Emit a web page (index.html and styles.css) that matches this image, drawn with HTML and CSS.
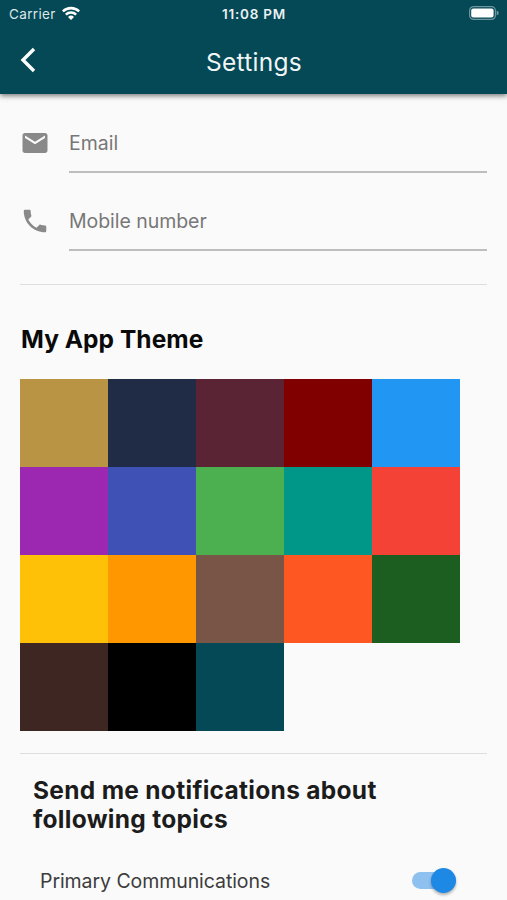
FILE: index.html
```html
<!DOCTYPE html>
<html lang="en">
<head>
<meta charset="utf-8">
<title>Settings</title>
<link rel="stylesheet" href="styles.css">
</head>
<body>
<header class="appbar">
  <div class="status">
    <div class="carrier"><span class="carrier-name">Carrier</span>
      <svg class="wifi" viewBox="0 0 18 14"><path d="M0 4.4A13 13 0 0 1 18 4.4L16.3 6.3A10.6 10.6 0 0 0 1.7 6.3ZM3 7.7A8.6 8.6 0 0 1 15 7.7L13.3 9.5A6.2 6.2 0 0 0 4.7 9.5ZM6 10.9A4.3 4.3 0 0 1 12 10.9L9 14Z"/></svg>
    </div>
    <time class="clock">11:08 PM</time>
    <svg class="battery" viewBox="0 0 30 14"><rect class="shell" x=".6" y=".6" width="25.8" height="12.8" rx="4"/><rect x="2.2" y="2.4" width="22.4" height="9.2" rx="2"/><path class="cap" d="M27.6 4.6Q29.8 5.2 29.8 7T27.6 9.4Z"/></svg>
  </div>
  <div class="toolbar">
    <svg class="back" viewBox="0 0 16 26"><path d="M14 2 3 13l11 11"/></svg>
    <h1 class="title">Settings</h1>
  </div>
</header>
<main>
  <section class="fields">
    <div class="field">
      <svg class="icon" viewBox="0 0 24 24"><path d="M20 4H4c-1.1 0-1.99.9-1.99 2L2 18c0 1.1.9 2 2 2h16c1.1 0 2-.9 2-2V6c0-1.1-.9-2-2-2zm0 4l-8 5-8-5V6l8 5 8-5v2z"/></svg>
      <div class="input"><span class="email">Email</span></div>
    </div>
    <div class="field">
      <svg class="icon" viewBox="0 0 24 24"><path d="M6.62 10.79c1.44 2.83 3.76 5.14 6.59 6.59l2.2-2.2c.27-.27.67-.36 1.02-.24 1.12.37 2.33.57 3.57.57.55 0 1 .45 1 1V20c0 .55-.45 1-1 1-9.39 0-17-7.61-17-17 0-.55.45-1 1-1h3.5c.55 0 1 .45 1 1 0 1.25.2 2.45.57 3.57.11.35.03.74-.25 1.02l-2.2 2.2z"/></svg>
      <div class="input"><span class="mobile">Mobile number</span></div>
    </div>
  </section>
  <section class="theme">
    <h2 class="theme-title"><span>My App Theme</span></h2>
    <div class="swatches">
      <i class="gold"></i><i class="navy"></i><i class="wine"></i><i class="maroon"></i><i class="blue"></i>
      <i class="purple"></i><i class="indigo"></i><i class="green"></i><i class="teal"></i><i class="red"></i>
      <i class="amber"></i><i class="orange"></i><i class="brown"></i><i class="deep"></i><i class="forest"></i>
      <i class="coffee"></i><i class="black"></i><i class="petrol"></i>
    </div>
  </section>
  <section class="topics">
    <h2 class="topics-title">Send me notifications about<br>following topics</h2>
    <div class="topic"><span class="topic-name">Primary Communications</span><span class="switch"></span></div>
  </section>
</main>
</body>
</html>
```
FILE: styles.css
```css
* { box-sizing: border-box; }
body { margin: 0; height: 900px; overflow: hidden; background: #fafafa; color: #1c1c1c; font-family: Inter, "Liberation Sans", sans-serif; }
h1, h2 { margin: 0; }
.appbar { position: relative; height: 94px; background: #054856; color: #fff; box-shadow: 0 2px 5px rgba(0,0,0,.5); }
.status { display: grid; grid-template-columns: 1fr auto 1fr; align-items: center; height: 27px; padding: 0 8px 0 9px; }
.carrier { display: flex; align-items: center; gap: 6px; font-size: 13.5px; letter-spacing: .35px; color: #dce7e9; }
.wifi { width: 18px; height: 14px; margin-top: -1px; fill: #fff; }
.clock { font-size: 13.5px; font-weight: 600; letter-spacing: .75px; color: #eaf1f2; }
.battery { width: 30px; height: 14px; margin-top: -1px; fill: #fff; justify-self: end; }
.shell { fill: none; stroke: #6f959e; stroke-width: 1.2; }
.cap { fill: #6f959e; }
.toolbar { display: grid; grid-template-columns: 20px 1fr 39px; align-items: center; height: 69px; padding: 0 0 0 20px; }
.back { width: 16px; height: 26px; margin-top: -4px; fill: none; stroke: #fff; stroke-width: 3.4; }
.title { font-size: 24.5px; font-weight: 400; text-align: center; letter-spacing: .25px; color: #f0f5f6; }
.fields { height: 191px; margin: 0 20px; padding-top: 20px; border-bottom: 1px solid #dedede; }
.field { display: grid; grid-template-columns: 49px 1fr; height: 78px; }
.icon { width: 30px; height: 30px; margin: 14px 0 0; fill: #898989; }
.input { height: 59px; padding-top: 17px; border-bottom: 2px solid #bdbdbd; font-size: 19.5px; line-height: 24px; color: #777; }
.mobile { letter-spacing: -.05px; }
.theme { height: 469px; margin: 0 20px; padding-top: 38px; border-bottom: 1px solid #dedede; }
.theme-title { height: 56.4px; padding-left: 1px; font-size: 24.5px; line-height: 32px; font-weight: 650; letter-spacing: .05px; color: #0a0a0a; }
.swatches { display: grid; grid-template-columns: repeat(5, 88px); grid-auto-rows: 88px; padding-left: .4px; }
.gold { background: #b99444; } .navy { background: #202b45; } .wine { background: #5b2434; } .maroon { background: #800000; } .blue { background: #2196f3; }
.purple { background: #9c27b0; } .indigo { background: #3f51b5; } .green { background: #4caf50; } .teal { background: #009688; } .red { background: #f44336; }
.amber { background: #ffc107; } .orange { background: #ff9800; } .brown { background: #795548; } .deep { background: #ff5722; } .forest { background: #1b5e20; }
.coffee { background: #3e2723; } .black { background: #000; } .petrol { background: #054856; }
.topics { padding: 22px 51px 0 33px; }
.topics-title { font-size: 24.5px; line-height: 29px; font-weight: 650; letter-spacing: .3px; white-space: nowrap; }
.topic { display: flex; justify-content: space-between; align-items: center; height: 44px; margin-top: 25px; padding-left: 7px; font-size: 19.5px; letter-spacing: -.07px; color: #3c3c3c; }
.switch { position: relative; width: 44px; height: 17px; margin-bottom: 1px; border-radius: 9px; background: #8ec0f0; }
.switch::after { content: ""; position: absolute; right: 0; top: -4px; width: 25px; height: 25px; border-radius: 50%; background: #1e88e5; box-shadow: 0 2px 3px rgba(0,0,0,.3); }
```
